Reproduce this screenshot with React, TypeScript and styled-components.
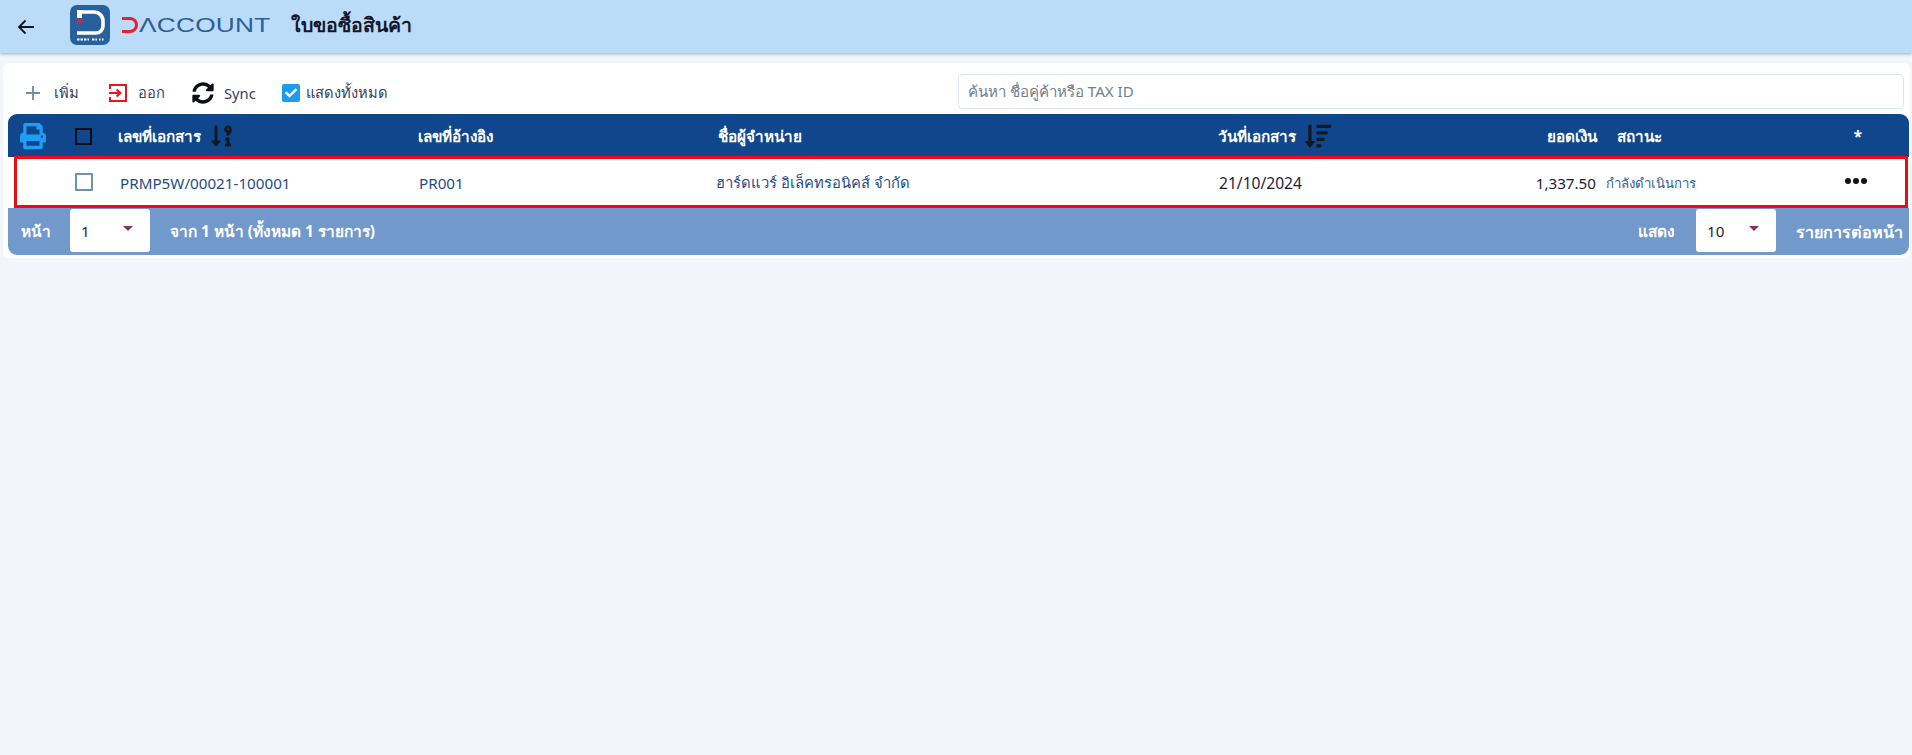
import React from "react";
import styled, { createGlobalStyle } from "styled-components";
import { FaPrint, FaSyncAlt, FaSortNumericDownAlt, FaSortAmountDown, FaCheck } from "react-icons/fa";

const Global = createGlobalStyle`
  html, body { margin: 0; padding: 0; background: #f2f6fb; }
  body { font-family: "Noto Sans", "Noto Sans CJK SC", "DejaVu Sans", sans-serif; min-height: 755px; }
  * { box-sizing: border-box; }
`;

const Page = styled.div`
  min-height: 755px;
  background: #f2f6fb;
`;
const Header = styled.header`
  height: 53px;
  background: #bbdcf9;
  box-shadow: 0 1px 3px rgba(70, 70, 70, 0.45);
  display: flex;
  align-items: center;
  padding-left: 17px;
`;
const BackButton = styled.div`
  width: 18px;
  height: 18px;
  color: #10141f;
  display: flex;
  margin-right: 35px;
`;
const LogoMark = styled.svg`
  width: 40px;
  height: 40px;
  margin-top: -3px;
  flex: none;
`;
const Wordmark = styled.div`
  display: flex;
  align-items: center;
  margin-left: 12px;
  width: 149px;
  margin-top: -3px;
`;
const RedD = styled.span`
  width: 16px;
  height: 16px;
  border: 3px solid #e8202a;
  border-left: 0;
  border-radius: 0 8px 8px 0;
  flex: none;
`;
const WordText = styled.span`
  display: inline-block;
  font-family: "Liberation Sans", sans-serif;
  font-size: 21px;
  line-height: 20px;
  color: #2c5e98;
  transform: scaleX(1.25);
  transform-origin: left center;
  margin-left: 1px;
  letter-spacing: 0.2px;
`;
const Title = styled.h1`
  margin: -3px 0 0 20px;
  font-size: 19.5px;
  font-weight: 700;
  color: #14172b;
  line-height: 24px;
`;
const Card = styled.main`
  margin: 10px 2px 0 3px;
  background: #fff;
  border-radius: 6px;
  padding: 0 1px 4px 5px;
  height: 195px;
`;
const Toolbar = styled.div`
  height: 51px;
  display: flex;
  align-items: center;
  padding: 6px 5px 0 0;
`;
const ToolItem = styled.div<{ $w: number }>`
  width: ${(p) => p.$w}px;
  display: flex;
  align-items: center;
  font-size: 14.7px;
  color: #33405f;
  flex: none;
  padding-top: 2px;
`;
const ToolIcon = styled.span<{ $w: number; $c?: string }>`
  width: ${(p) => p.$w}px;
  display: flex;
  align-items: center;
  color: ${(p) => p.$c || "#33405f"};
  flex: none;
`;
const ShowAll = styled.span`
  width: 18px;
  height: 18px;
  background: #1c9cf0;
  border-radius: 2px;
  color: #fff;
  display: flex;
  align-items: center;
  justify-content: center;
  margin-right: 6px;
  font-size: 12px;
  flex: none;
`;
const Search = styled.div`
  margin-left: auto;
  width: 946px;
  height: 35px;
  border: 1px solid #dfe5ec;
  border-radius: 4px;
  padding: 1px 9px 0;
  display: flex;
  align-items: center;
  font-size: 15.1px;
  color: #71808f;
`;
const Table = styled.section`
  border-radius: 9px;
  overflow: hidden;
`;
const HeadRow = styled.div`
  display: grid;
  grid-template-columns: 56px 54px 300px 300px 500px 200px 179px 210px 1fr;
  align-items: center;
  height: 43px;
  padding-top: 1px;
  background: #0f468c;
  color: #fff;
  font-size: 15.3px;
  font-weight: 700;
`;
const BodyRow = styled.div`
  display: grid;
  grid-template-columns: 49px 54px 299px 297px 503px 200px 177px 209px 1fr;
  align-items: center;
  height: 52px;
  margin: -1px 1px 0 6px;
  border: 3px solid #ee0b16;
  background: #fff;
  position: relative;
`;
const HeadCell = styled.div<{ $right?: boolean; $center?: boolean; $pad?: number }>`
  display: flex;
  align-items: center;
  gap: 9px;
  padding-left: ${(p) => p.$pad || 0}px;
  justify-content: ${(p) => (p.$right ? "flex-end" : p.$center ? "center" : "flex-start")};
`;
const PrintCell = styled(HeadCell)`
  padding-left: 12px;
  color: #1e9df2;
  font-size: 26px;
`;
const SortIcon = styled.span<{ $size: number }>`
  color: #14181f;
  font-size: ${(p) => p.$size}px;
  display: flex;
`;
const HeadCheck = styled.span`
  width: 17px;
  height: 17px;
  border: 2px solid #0b0f1a;
  display: block;
  margin-left: 11px;
`;
const RowCheck = styled.span`
  width: 18px;
  height: 18px;
  border: 2px solid #7290b3;
  background: #fff;
  display: block;
  margin-left: 9px;
  border-radius: 1px;
`;
const Cell = styled.div<{ $c?: string; $right?: boolean; $size?: number; $pad?: number }>`
  color: ${(p) => p.$c || "#1f4b85"};
  font-size: ${(p) => p.$size || 15.2}px;
  text-align: ${(p) => (p.$right ? "right" : "left")};
  padding-left: ${(p) => p.$pad || 0}px;
  padding-top: 2px;
  white-space: nowrap;
`;
const Dots = styled.div`
  display: flex;
  gap: 2px;
  justify-content: center;
  margin-top: -2px;
  padding-left: 1px;
`;
const Dot = styled.i`
  width: 6px;
  height: 6px;
  border-radius: 50%;
  background: #10121f;
  display: block;
`;
const Footer = styled.div`
  height: 47px;
  background: #7299cc;
  display: flex;
  align-items: center;
  color: #fff;
  font-size: 15.4px;
  font-weight: 700;
  padding: 0 6px 0 13px;
`;
const Select = styled.div`
  width: 80px;
  height: 43px;
  margin-top: -2px;
  background: #fff;
  border-radius: 3px;
  display: flex;
  align-items: center;
  justify-content: space-between;
  padding: 0 17px 0 11px;
  color: #1c1c38;
  font-weight: 400;
  font-size: 15.2px;
  flex: none;
`;
const Caret = styled.span`
  width: 0;
  height: 0;
  border-left: 5px solid transparent;
  border-right: 5px solid transparent;
  border-top: 5px solid #8a3550;
  margin-top: -4px;
`;
const FootText = styled.span<{ $ml?: number; $mr?: number; $auto?: boolean; $size?: number }>`
  margin-left: ${(p) => (p.$auto ? "auto" : `${p.$ml || 0}px`)};
  margin-right: ${(p) => p.$mr || 0}px;
  white-space: nowrap;
  ${(p) => (p.$size ? `font-size: ${p.$size}px;` : "")}
`;

export default function App() {
  return (
    <Page>
      <Global />
      <Header>
        <BackButton>
          <svg width="18" height="18" viewBox="0 0 18 18" fill="none" stroke="currentColor" strokeWidth="1.8">
            <path d="M17 9H2M8.5 2.5 2 9l6.5 6.5" />
          </svg>
        </BackButton>
        <LogoMark viewBox="0 0 40 40">
          <rect width="40" height="40" rx="7" fill="#28609c" />
          <path d="M7 7H24a9 9 0 0 1 9 9v5a7 7 0 0 1-7 7H7" fill="none" stroke="#fff" strokeWidth="3.6" />
          <path d="M7 5h5v8H7z" fill="#fff" />
          <circle cx="9.5" cy="16" r="2.5" fill="#e8202a" />
          <path d="M7 34.5h12M22 34.5h5M29 34.5h1.5M32 34.5h1.5" stroke="#fff" strokeWidth="1.8" strokeDasharray="2.5 1" />
        </LogoMark>
        <Wordmark>
          <RedD />
          <WordText>ΛCCOUNT</WordText>
        </Wordmark>
        <Title>ใบขอซื้อสินค้า</Title>
      </Header>
      <Card>
        <Toolbar>
          <ToolItem $w={100}>
            <ToolIcon $w={46} $c="#6f88ad">
              <svg width="40" height="16" viewBox="0 0 40 16" fill="none" stroke="currentColor" strokeWidth="1.8">
                <path d="M25 1v14M18 8h14" />
              </svg>
            </ToolIcon>
            เพิ่ม
          </ToolItem>
          <ToolItem $w={84}>
            <ToolIcon $w={30} $c="#e8141f">
              <svg width="20" height="20" viewBox="0 0 20 20" fill="none" stroke="currentColor" strokeWidth="2">
                <path d="M2 6V2h16v16H2v-4M1 10h11M8.5 6.5 12.5 10l-4 3.5" />
              </svg>
            </ToolIcon>
            ออก
          </ToolItem>
          <ToolItem $w={90}>
            <ToolIcon $w={32} $c="#0d0f16">
              <FaSyncAlt size={22} />
            </ToolIcon>
            Sync
          </ToolItem>
          <ToolItem $w={140}>
            <ShowAll>
              <FaCheck />
            </ShowAll>
            แสดงทั้งหมด
          </ToolItem>
          <Search>ค้นหา ชื่อคู่ค้าหรือ TAX ID</Search>
        </Toolbar>
        <Table>
          <HeadRow>
            <PrintCell>
              <FaPrint />
            </PrintCell>
            <HeadCell>
              <HeadCheck />
            </HeadCell>
            <HeadCell>
              เลขที่เอกสาร
              <SortIcon $size={24}>
                <FaSortNumericDownAlt />
              </SortIcon>
            </HeadCell>
            <HeadCell>เลขที่อ้างอิง</HeadCell>
            <HeadCell>ชื่อผู้จำหน่าย</HeadCell>
            <HeadCell>
              วันที่เอกสาร
              <SortIcon $size={26}>
                <FaSortAmountDown />
              </SortIcon>
            </HeadCell>
            <HeadCell $right>ยอดเงิน</HeadCell>
            <HeadCell $pad={20}>สถานะ</HeadCell>
            <HeadCell $center>*</HeadCell>
          </HeadRow>
          <BodyRow>
            <div />
            <div>
              <RowCheck />
            </div>
            <Cell>PRMP5W/00021-100001</Cell>
            <Cell>PR001</Cell>
            <Cell $size={14.8}>ฮาร์ดแวร์ อิเล็คทรอนิคส์ จำกัด</Cell>
            <Cell $c="#1c1c38" $size={15.6}>
              21/10/2024
            </Cell>
            <Cell $c="#1c1c38" $right>
              1,337.50
            </Cell>
            <Cell $size={13.2} $c="#2f6097" $pad={10}>
              กำลังดำเนินการ
            </Cell>
            <Dots>
              <Dot />
              <Dot />
              <Dot />
            </Dots>
          </BodyRow>
          <Footer>
            <FootText $mr={19}>หน้า</FootText>
            <Select>
              1<Caret />
            </Select>
            <FootText $ml={20}>จาก 1 หน้า (ทั้งหมด 1 รายการ)</FootText>
            <FootText $auto $mr={21}>
              แสดง
            </FootText>
            <Select>
              10
              <Caret />
            </Select>
            <FootText $ml={20} $size={16.2}>
              รายการต่อหน้า
            </FootText>
          </Footer>
        </Table>
      </Card>
    </Page>
  );
}
